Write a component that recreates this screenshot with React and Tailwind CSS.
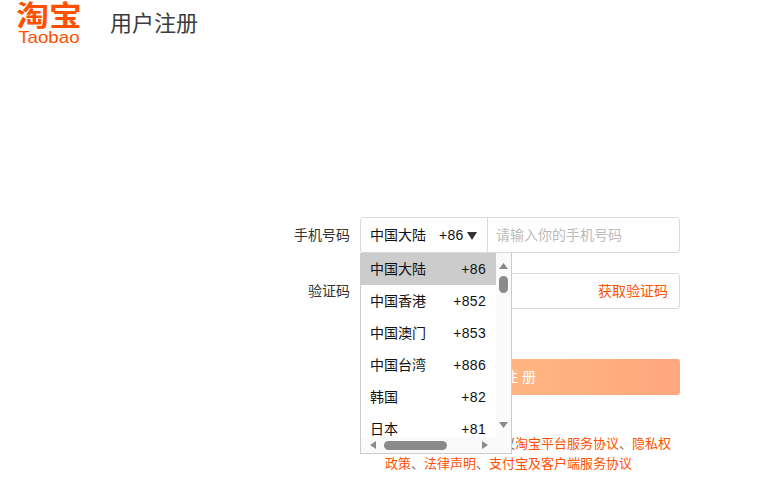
const font = { fontFamily: '"Liberation Sans","Noto Sans CJK SC",sans-serif' };

const rows = [
  ["中国大陆", "+86"],
  ["中国香港", "+852"],
  ["中国澳门", "+853"],
  ["中国台湾", "+886"],
  ["韩国", "+82"],
  ["日本", "+81"],
];

function Tri({ dir, className }) {
  const p = {
    up: "0,8 5,0 10,8",
    down: "0,0 10,0 5,8",
    left: "8,0 8,10 0,5",
    right: "0,0 0,10 8,5",
  }[dir];
  const box = dir === "up" || dir === "down" ? "0 0 10 8" : "0 0 8 10";
  return (
    <svg viewBox={box} preserveAspectRatio="none" className={className}>
      <polygon points={p} fill="currentColor" />
    </svg>
  );
}

function Dropdown() {
  return (
    <div className="absolute left-0 top-[36px] z-10 w-[152px] h-[201px] bg-white border-x border-b border-[#ccc] flex flex-col">
      <div className="flex h-[184px]">
        <ul className="w-[135px] h-[184px] overflow-hidden">
          {rows.map(([n, c], i) => (
            <li
              key={n}
              className={`h-[32px] flex items-center justify-between pl-[9px] pr-[10px] text-[14px] text-[#111] ${i === 0 ? "bg-[#ccc]" : ""}`}
            >
              <span>{n}</span>
              <span className="tracking-[0.3px]">{c}</span>
            </li>
          ))}
        </ul>
        <div className="w-[15px] bg-[#fafafa] flex flex-col items-center text-[#8a8a8a] pt-[10px]">
          <Tri dir="up" className="w-[9px] h-[6px]" />
          <div className="w-[9px] h-[17px] rounded-full bg-[#8a8a8a] mt-[7px]" />
          <div className="flex-1" />
          <Tri dir="down" className="w-[9px] h-[6px] mb-[9px]" />
        </div>
      </div>
      <div className="flex-1 bg-[#fafafa] flex items-center text-[#8a8a8a] pl-[9px]">
        <Tri dir="left" className="w-[6px] h-[8px]" />
        <div className="w-[63px] h-[9px] rounded-full bg-[#8a8a8a] ml-[8px]" />
        <div className="ml-[35px] flex">
          <Tri dir="right" className="w-[6px] h-[8px]" />
        </div>
      </div>
    </div>
  );
}

export default function App() {
  return (
    <div className="w-[777px] h-[486px] bg-white overflow-hidden" style={font}>
      <header className="flex items-start h-[45px]">
        <div className="ml-[16px] w-[66px] flex flex-col items-center text-[#ff5000]">
          <div className="mt-[2px] text-[28px] leading-[29px] font-bold whitespace-nowrap scale-x-[1.17] origin-center">淘宝</div>
          <div className="text-[17px] leading-[14px] scale-x-[1.1] origin-center">Taobao</div>
        </div>
        <h1 className="ml-[28px] mt-[9px] text-[22px] leading-[30px] text-[#3c3c3c]">用户注册</h1>
      </header>

      <main className="mt-[172px] ml-[279px] w-[401px] flex flex-col">
        <div className="flex items-center h-[36px]">
          <label className="w-[71px] text-right text-[14px] text-[#333]">手机号码</label>
          <div className="relative ml-[10px] w-[320px] h-[36px] border border-[#d9d9d9] rounded-[3px] flex items-center">
            <div className="w-[127px] h-full border-r border-[#d9d9d9] flex items-center pl-[9px] text-[14px] text-[#111]">
              <span>中国大陆</span>
              <span className="ml-[13px] tracking-[0.3px]">+86</span>
              <Tri dir="down" className="ml-[3px] w-[10px] h-[8px] text-[#333] mt-[1px]" />
            </div>
            <span className="pl-[8px] text-[14px] text-[#bbb]">请输入你的手机号码</span>
            <div className="absolute -left-px -top-px">
              <Dropdown />
            </div>
          </div>
        </div>

        <div className="flex items-center h-[36px] mt-[20px]">
          <label className="w-[71px] text-right text-[14px] text-[#333]">验证码</label>
          <div className="ml-[10px] w-[320px] h-[36px] border border-[#d9d9d9] rounded-[3px] flex items-center justify-end pr-[11px]">
            <span className="text-[14px] text-[#ff5000]">获取验证码</span>
          </div>
        </div>

        <button className="ml-[81px] mt-[50px] w-[320px] h-[36px] rounded-[3px] bg-gradient-to-r from-[#ffc285] to-[#ffa77f] text-white text-[14px]">
          注 册
        </button>

        <p className="ml-[106px] mt-[39px] w-[294px] text-[13px] leading-[20px] text-[#ff5000]">
          <span className="text-[#666]">已阅读并同意以下协议</span>淘宝平台服务协议<span className="text-[#666]">、</span>隐私权政策<span className="text-[#666]">、</span>法律声明<span className="text-[#666]">、</span>支付宝及客户端服务协议
        </p>
      </main>
    </div>
  );
}
